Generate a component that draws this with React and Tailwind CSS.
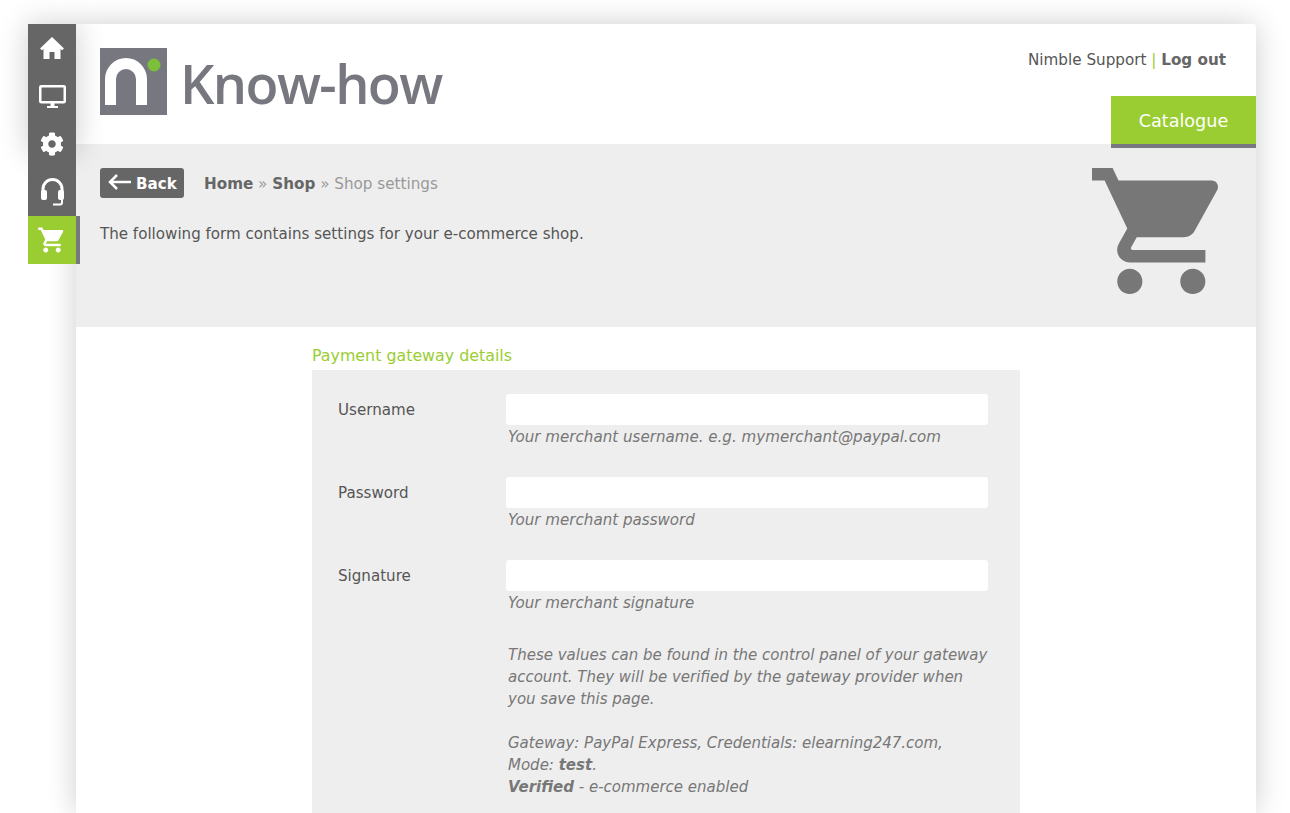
import React from 'react';
import { FaCog } from 'react-icons/fa';

const CART = 'M7 18c-1.1 0-1.99.9-1.99 2S5.9 22 7 22s2-.9 2-2-.9-2-2-2zM1 2v2h2l3.6 7.59-1.35 2.45c-.16.28-.25.61-.25.96 0 1.1.9 2 2 2h12v-2H7.42c-.14 0-.25-.11-.25-.25l.03-.12.9-1.63h7.45c.75 0 1.41-.41 1.75-1.03l3.58-6.49c.08-.14.12-.31.12-.48 0-.55-.45-1-1-1H5.21l-.94-2H1zm16 16c-1.1 0-1.99.9-1.99 2s.89 2 1.99 2 2-.9 2-2-.9-2-2-2z';

function HomeIcon() {
  return (
    <svg viewBox="0 0 24 22" className="w-6 h-[22px]" fill="white">
      <path d="M12 0L24 11.5 22 13.2 20.5 12V22H14.5V15H9.5V22H3.5V12L2 13.2 0 11.5Z" />
    </svg>
  );
}

function Monitor() {
  return (
    <svg viewBox="0 0 27 23" className="w-[27px] h-[23px]" fill="white">
      <rect x="1.250" y="1.250" width="24.500" height="16" rx="1" fill="none" stroke="white" strokeWidth="2.500" />
      <rect x="11.500" y="18" width="4" height="3" />
      <rect x="8" y="21" width="11" height="2" />
    </svg>
  );
}

function Headset() {
  return (
    <svg viewBox="0 0 23 28" className="w-[23px] h-7" fill="none" stroke="white">
      <path d="M2 17V11a9.500 9.500 0 0 1 19 0v6" strokeWidth="3" />
      <rect x="0" y="12" width="6" height="10" rx="2" fill="white" stroke="none" />
      <rect x="17" y="12" width="6" height="10" rx="2" fill="white" stroke="none" />
      <path d="M21 21v3.500a2 2 0 0 1-2 2h-7" strokeWidth="2" />
    </svg>
  );
}

function Field({ label, hint }) {
  return (
    <div className="flex mb-[29px]">
      <label className="w-[194px] pl-[26px] pt-[5px] leading-[22px]">{label}</label>
      <div>
        <input type="text" className="block w-[482px] h-[31px] bg-white rounded-[3px]" />
        <p className="pl-[2px] pt-px italic text-[#777777] leading-[22px]">{hint}</p>
      </div>
    </div>
  );
}

export default function App() {
  return (
    <div className="h-screen overflow-hidden bg-white pt-6 pl-7 flex text-[15.1px] text-[#555555]" style={{ fontFamily: '"DejaVu Sans", Verdana, sans-serif' }}>
      {/* side nav */}
      <nav className="w-12 h-[240px] shrink-0 relative z-10">
        <div className="absolute inset-x-0 top-0 h-[130px] shadow-[0_0_30px_rgba(0,0,0,0.2)]" />
        <div className="relative bg-[#666666]">
          <div className="h-12 flex items-center justify-center pb-px"><HomeIcon /></div>
          <div className="h-12 flex items-center justify-center"><Monitor /></div>
          <div className="h-12 flex items-center justify-center"><FaCog size={24} color="white" /></div>
          <div className="h-12 flex items-center justify-center"><Headset /></div>
          <div className="h-12 flex items-center justify-center bg-[#9acd32] relative">
            <svg viewBox="0 0 24 24" className="w-[30px] h-[30px]" fill="white"><path d={CART} /></svg>
            <span className="absolute left-12 top-0 w-1 h-12 bg-[#77777f]" />
          </div>
        </div>
      </nav>

      <div className="w-[1180px] shrink-0 shadow-[0_0_30px_rgba(0,0,0,0.2)] rounded-tr-[3px] bg-white">
        <header className="h-[120px] flex justify-between pl-6">
          <div className="pt-6 flex items-start">
            <svg viewBox="0 0 67 67" className="w-[67px] h-[67px]">
              <rect width="67" height="67" fill="#77787f" />
              <path d="M5 57V31a21 21 0 0 1 42 0v26H36V31a10 10 0 0 0-20 0v26z" fill="white" />
              <circle cx="54" cy="17" r="6.500" fill="#7cbf3a" />
            </svg>
            <span className="ml-[13px] text-[54px] leading-[70px] tracking-[-1.6px] font-semibold text-[#77787f]" style={{ fontFamily: '"Open Sans", sans-serif' }}>Know-how</span>
          </div>
          <div className="flex flex-col items-end justify-between">
            <div className="pt-[25px] pr-[30px] leading-[22px] text-[15.2px]">
              Nimble Support <span className="text-[#9acd32]">|</span> <a className="font-bold text-[#666666]">Log out</a>
            </div>
            <div className="w-[145px] h-[52px] -mb-1 pt-[2px] bg-[#9acd32] border-b-4 border-[#77777f] text-white text-[17.6px] flex items-center justify-center relative z-10">Catalogue</div>
          </div>
        </header>

        <section className="h-[183px] bg-[#eeeeee] pl-6 pr-[38px] pt-6 flex justify-between">
          <div>
            <div className="flex items-center h-[30px]">
              <button className="w-[84px] h-[30px] bg-[#666666] rounded-[3px] text-white font-bold flex items-center pl-2">
                <svg viewBox="0 0 24 16" className="w-6 h-4 mr-1 -mt-[2px]" fill="none" stroke="white" strokeWidth="2.500"><path d="M23 8H2M9 1L2 8l7 7" /></svg>
                <span className="pt-[2px]">Back</span>
              </button>
              <div className="ml-5 pt-[2px] text-[#666666] text-[15.2px]">
                <b>Home</b> <span className="text-[#999999]">»</span> <b>Shop</b> <span className="text-[#999999]">» Shop settings</span>
              </div>
            </div>
            <p className="mt-[25px] leading-[22px]">The following form contains settings for your e-commerce shop.</p>
          </div>
          <svg viewBox="1 2 20 20" className="w-[126px] h-[126px]" fill="#777777"><path d={CART} /></svg>
        </section>

        <section className="pl-[236px] pt-[18px]">
          <h2 className="text-[#9acd32] leading-[22px] text-[15.85px] font-normal">Payment gateway details</h2>
          <div className="w-[708px] bg-[#eeeeee] pt-6 pb-10 mt-[3px]">
            <Field label="Username" hint="Your merchant username. e.g. mymerchant@paypal.com" />
            <Field label="Password" hint="Your merchant password" />
            <Field label="Signature" hint="Your merchant signature" />
            <div className="ml-[196px] mr-[30px] italic text-[#777777] leading-[22px] pt-px text-[15px]">
              <p>These values can be found in the control panel of your gateway account. They will be verified by the gateway provider when you save this page.</p>
              <p className="mt-[22px]">Gateway: PayPal Express, Credentials: elearning247.com, Mode: <b>test</b>.</p>
              <p><b>Verified</b> - e-commerce enabled</p>
            </div>
          </div>
        </section>
      </div>
    </div>
  );
}
